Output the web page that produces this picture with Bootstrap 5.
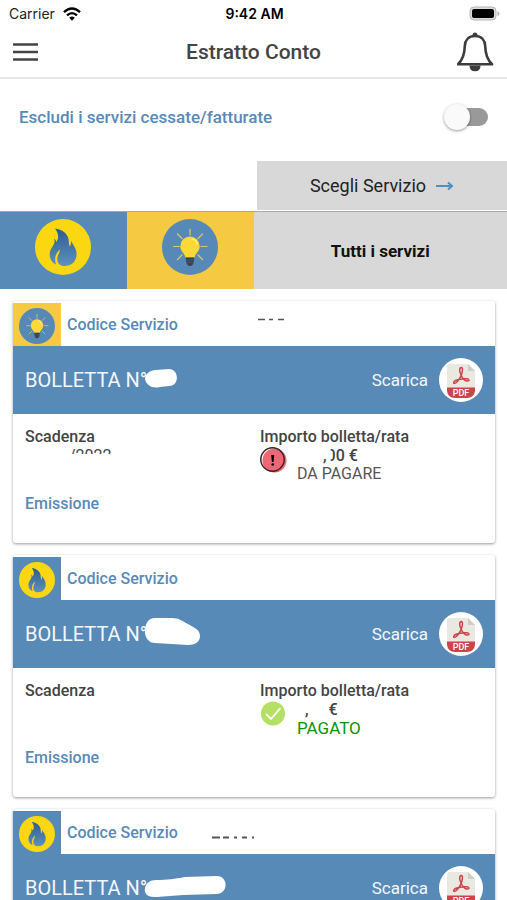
<!DOCTYPE html>
<html lang="it">
<head>
<meta charset="utf-8">
<meta name="viewport" content="width=device-width, initial-scale=1">
<title>Estratto Conto</title>
<link href="https://cdn.jsdelivr.net/npm/bootstrap@5.3.0/dist/css/bootstrap.min.css" rel="stylesheet">
<style>
  :root { --brand: #588ab8; --sun: #f5ca42; --ink: #444; }
  body { font-family: Roboto, "Liberation Sans", sans-serif; font-size: 16px; line-height: 20px; color: var(--ink); background: #fff; }
  svg { display: block; flex: none; }
  .fw-mid { font-weight: 500; }
  .brand { color: var(--brand); }
  .status-bar { height: 27px; padding: 0 7px 0 9px; font-family: Inter, Roboto, sans-serif; font-size: 14px; color: #222; }
  .status-bar > * { flex: 1 1 0; }
  .app-bar { height: 52px; padding: 0 12px; border-bottom: 2px solid #e6e6e6; }
  .app-bar h1 { font-size: 21px; line-height: 24px; }
  .filter-row { height: 76px; padding: 0 19px; font-size: 17px; }
  .switch { appearance: none; width: 44px; height: 26px; margin: 0; position: relative; }
  .switch::after { content: ""; position: absolute; right: 0; top: 4px; width: 34px; height: 18px; border-radius: 9px; background: #999; }
  .switch::before { content: ""; position: absolute; z-index: 1; left: 0; top: 0; width: 26px; height: 26px; border-radius: 50%; background: #fafafa; box-shadow: 0 1px 3px #0006; transition: left .15s; }
  .switch:checked::before { left: 18px; }
  .choose { height: 49px; width: calc(50% + -4px); min-width: 250px; background: #d8d8d8; color: #222; font-size: 18px; margin-top: 6px; padding: 0; }
  .tabs { height: 78px; margin-top: 1px; border-top: 1px solid #a8a8a8; }
  .tabs button { padding: 0; flex: 1 1 25%; }
  .tabs .icon-tab { padding-bottom: 7px; }
  .tabs .all-tab { flex-basis: 50%; background: #d8d8d8; color: #111; font-size: 17px; }
  .gas { background: var(--brand); }
  .power { background: var(--sun); }
  .bills { padding: 12px 12px 12px 13px; display: grid; gap: 12px; }
  .bill { height: 242px; border-radius: 3px; background: #fff; box-shadow: 0 1px 3px #0006; overflow: hidden; }
  .bill-head { height: 45px; gap: 6px; padding-top: 2px; }
  .kind { width: 48px; height: 43px; padding-top: 5px; margin-bottom: 1px; }
  .bill-bar { height: 68px; padding: 0 12px; background: var(--brand); color: #f3f7fb; }
  .bill-bar h2 { font-size: 20px; line-height: 24px; font-weight: 400; }
  .bill-bar a { gap: 11px; color: #f3f7fb; font-size: 17px; }
  .blob { margin-left: -3px; }
  .bill-body { padding: 13px 12px 0; line-height: 20px; }
  .bill-body > div { flex: 1 1 0; }
  .bill-body .amount-col { padding-left: 12px; }
  .date-cut { height: 18px; padding-left: 44px; line-height: 18px; clip-path: inset(0 0 11px 0); margin-bottom: 29px; }
  .amount { gap: 10px; line-height: 18px; }
  .amount .sum { padding-left: 26px; }
  .amount .sum-short { padding-left: 8px; }
  .euro { padding-left: 20px; }
  .half { display: inline-block; clip-path: inset(0 0 0 45%); }
  .state { color: #555; }
  .paid { color: #0a930a; font-size: 17px; }
</style>
<script src="https://cdn.jsdelivr.net/npm/bootstrap@5.3.0/dist/js/bootstrap.bundle.min.js"></script>
</head>
<body>
<svg width="0" height="0" class="position-absolute" aria-hidden="true">
  <defs>
    <linearGradient id="fl" x1="0" y1="0" x2="0" y2="1"><stop offset="0" stop-color="#2b5c8e"/><stop offset=".6" stop-color="#4a7cab"/><stop offset="1" stop-color="#5e91be"/></linearGradient>
    <symbol id="flame" viewBox="0 0 56 56">
      <circle cx="28" cy="28" r="28" fill="#fbd711"/>
      <path fill="url(#fl)" d="M20 9.500c7 .8 12.500 5 13.500 10.500.4 3 .3 5 1.300 7.500 1-1.500 1.400-3.500 1.200-6 1.500 4 5.600 7.500 5.600 13.500 0 7-4.600 12-12.100 12-5 0-7.500-3.500-7.200-7.500.3-3.500 2.200-5 2.700-9-4.500 3.500-6 9-4 15-4-1.500-6.500-5.500-6.300-11 .2-4 3.500-7 4.600-10.500.5-1.500.3-3-.3-4.500 1.500 1 2 2 2.200 3.500 3-4 2.300-9-1.200-13.500z"/>
    </symbol>
    <symbol id="bulb" viewBox="0 0 56 56">
      <circle cx="28" cy="28" r="28" fill="#5689b7"/>
      <path stroke="#d9ca62" stroke-width="1.200" stroke-linecap="round" d="M28 10v6M11.500 27.500h6M39 27.500h6M15.500 15l4.500 4.500M40.500 15L36 19.500M15.500 40.500L20 36M40.500 40.500L36 36"/>
      <path fill="#fcd936" d="M28 17.500a9.700 9.700 0 0 1 9.700 9.700c0 5-4 6.500-5.200 11.300h-9c-1.200-4.800-5.200-6.300-5.200-11.300a9.700 9.700 0 0 1 9.700-9.700z"/>
      <path fill="none" stroke="#fff2a0" stroke-width="1.200" stroke-linecap="round" d="M30 20c3 .6 5 2.600 5.200 5.500"/>
      <path fill="#39424d" d="M23.700 38.500h8.600l-.6 5c-.3 1.500-1.700 3.500-3.700 3.500s-3.400-2-3.700-3.500z"/>
      <path stroke="#59636e" stroke-width=".6" d="M24 41h8M24.500 43.500h7"/>
    </symbol>
    <symbol id="pdf" viewBox="0 0 44 44">
      <circle cx="22" cy="22" r="22" fill="#fff"/>
      <path fill="#e9e8e1" d="M11 6h18l7 7v17H8V9q0-3 3-3z"/>
      <path fill="#cfcec6" d="M29 6l7 7h-7z"/>
      <path fill="none" stroke="#ca4448" stroke-width="1.500" stroke-linejoin="round" d="M22 17c-2-4-1.500-7.500.2-7.500 1.700 0 1.600 3.500.1 7.500-1.300 3.500-4.800 8.500-6.800 8.500-1.500 0-1-2.200 1.500-3.200 3.500-1.300 8-1.800 11-1.500 2.500.3 2.500 2.300.5 2.300-2.300 0-5-2.600-6.500-6.100z"/>
      <path fill="#ca4448" d="M8 29.500h28v3.500q-1 7-8 7H16q-7 0-8-7z"/>
      <text x="22" y="38" text-anchor="middle" font-family="Roboto, sans-serif" font-size="9" font-weight="500" fill="#fff">PDF</text>
    </symbol>
  </defs>
</svg>

<div class="d-flex flex-column vh-100 overflow-hidden">
  <div class="status-bar d-flex align-items-center flex-shrink-0">
    <div class="d-flex align-items-center gap-2">Carrier
      <svg width="18" height="14" viewBox="0 0 18 14" fill="none" stroke="#000" stroke-width="2.300"><path d="M1 5.200q8-7.400 16 0M4 8.400q5-4.600 10 0"/><path d="M6.200 10.800q2.800-2.400 5.600 0L9 13.800z" fill="#000" stroke="none"/></svg>
    </div>
    <div class="text-center fw-semibold text-black">9:42 AM</div>
    <div class="d-flex justify-content-end">
      <svg width="31" height="15" viewBox="0 0 31 15"><rect x="1" y="1" width="26" height="13" rx="4" fill="#ddd" stroke="#b5b5b5"/><rect x="3" y="3" width="22" height="9" rx="2"/><path d="M28.500 5q2 1 2 2.500t-2 2.500z" fill="#b5b5b5"/></svg>
    </div>
  </div>

  <header class="app-bar d-flex align-items-center justify-content-between flex-shrink-0">
    <button class="btn p-0 border-0" type="button" aria-label="Menu">
      <svg width="38" height="20" viewBox="0 0 38 20" stroke="#444" stroke-width="2.600"><path d="M1 2.500h25M1 10h25M1 17.500h25"/></svg>
    </button>
    <h1 class="fw-mid m-0">Estratto Conto</h1>
    <button class="btn p-0 border-0" type="button" aria-label="Notifiche">
      <svg width="38" height="40" viewBox="0 0 38 40"><circle cx="18" cy="3" r="2.500" fill="#3d3d3d"/><path d="M12.500 33.500h11q0 5.800-5.500 5.800t-5.500-5.800z" fill="#3d3d3d"/><path d="M18 4c6.500 0 10 4.300 10.200 10 .2 9 2.300 14 6.800 18.300H1C5.500 28 7.600 23 7.800 14 8 8.300 11.500 4 18 4z" fill="#fff" stroke="#3d3d3d" stroke-width="2.600" stroke-linejoin="round"/></svg>
    </button>
  </header>

  <div class="filter-row d-flex align-items-center justify-content-between flex-shrink-0">
    <label for="hideClosed" class="brand fw-mid">Escludi i servizi cessate/fatturate</label>
    <input class="switch" type="checkbox" role="switch" id="hideClosed">
  </div>

  <button type="button" class="choose btn border-0 rounded-0 ms-auto d-flex align-items-center justify-content-center flex-shrink-0 gap-2">
    Scegli Servizio
    <svg width="20" height="12" viewBox="0 0 20 12" fill="none" stroke="#4d8fc0" stroke-width="2"><path d="M2 6h16M14 2.500l4 3.500-4 3.500"/></svg>
  </button>
  <nav class="tabs d-flex flex-shrink-0" aria-label="Servizi">
    <button type="button" class="icon-tab gas border-0 d-flex align-items-center justify-content-center" aria-label="Gas"><svg width="56" height="56"><use href="#flame"/></svg></button>
    <button type="button" class="icon-tab power border-0 d-flex align-items-center justify-content-center" aria-label="Luce"><svg width="56" height="56"><use href="#bulb"/></svg></button>
    <button type="button" class="all-tab border-0 fw-bold">Tutti i servizi</button>
  </nav>

  <main class="bills flex-grow-1 overflow-hidden">
    <article class="bill">
      <div class="bill-head d-flex align-items-center">
        <div class="kind power d-flex justify-content-center"><svg width="36" height="36"><use href="#bulb"/></svg></div>
        <span class="brand fw-mid">Codice Servizio</span>
        <svg class="ms-5" width="110" height="14" viewBox="0 0 110 14" stroke="#555" stroke-width="1.300"><path d="M26 1.500h7M37 1.500h4M46 1.500h6"/></svg>
      </div>
      <div class="bill-bar d-flex align-items-center justify-content-between">
        <div class="d-flex align-items-center"><h2 class="m-0">BOLLETTA N°</h2>
          <svg class="blob" width="34" height="22" viewBox="0 0 34 22" fill="#fff"><path d="M12 1l13-1c10 0 11 17 0 17l-9 1C8 20 2 16 1 10 1 5 6 1 12 1z"/></svg></div>
        <a href="#pdf1" class="d-flex align-items-center text-decoration-none">Scarica <svg width="44" height="44"><use href="#pdf"/></svg></a>
      </div>
      <div class="bill-body d-flex">
        <div>
          <div class="fw-mid">Scadenza</div>
          <div class="date-cut">/2022</div>
          <div class="brand fw-mid">Emissione</div>
        </div>
        <div class="amount-col">
          <div class="fw-mid">Importo bolletta/rata</div>
          <div class="amount d-flex">
            <svg width="27" height="26" viewBox="0 0 27 26"><circle cx="14.500" cy="13.500" r="12" fill="#ef6675"/><circle cx="12.500" cy="12.500" r="11.700" fill="none" stroke="#37252a" stroke-width="1.500"/><path d="M11.200 8h3l-.7 7h-1.600z"/><circle cx="12.700" cy="17.500" r="1.300"/></svg>
            <div><div class="sum fw-mid">,<span class="half">0</span>0 €</div><div class="state">DA PAGARE</div></div>
          </div>
        </div>
      </div>
    </article>

    <article class="bill">
      <div class="bill-head d-flex align-items-center">
        <div class="kind gas d-flex justify-content-center"><svg width="36" height="36"><use href="#flame"/></svg></div>
        <span class="brand fw-mid">Codice Servizio</span>
      </div>
      <div class="bill-bar d-flex align-items-center justify-content-between">
        <div class="d-flex align-items-center"><h2 class="m-0">BOLLETTA N°</h2>
          <svg class="blob" width="60" height="34" viewBox="0 0 60 34" fill="#fff"><path d="M11 1h17c7 0 10 3 16 6 7 4 12 6 12 12s-5 9-12 9l-33-2C5 26 1 21 1 15 1 7 4 1 11 1z"/></svg></div>
        <a href="#pdf2" class="d-flex align-items-center text-decoration-none">Scarica <svg width="44" height="44"><use href="#pdf"/></svg></a>
      </div>
      <div class="bill-body d-flex">
        <div>
          <div class="fw-mid">Scadenza</div>
          <div class="date-cut"></div>
          <div class="brand fw-mid">Emissione</div>
        </div>
        <div class="amount-col">
          <div class="fw-mid">Importo bolletta/rata</div>
          <div class="amount d-flex">
            <svg width="27" height="26" viewBox="0 0 27 26"><circle cx="13" cy="12.500" r="12" fill="#b4e065"/><path d="M6 13l5 5 9.500-11" fill="none" stroke="#fff" stroke-width="1.800"/></svg>
            <div><div class="sum-short fw-mid">,<span class="euro">€</span></div><div class="state paid">PAGATO</div></div>
          </div>
        </div>
      </div>
    </article>

    <article class="bill">
      <div class="bill-head d-flex align-items-center">
        <div class="kind gas d-flex justify-content-center"><svg width="36" height="36"><use href="#flame"/></svg></div>
        <span class="brand fw-mid">Codice Servizio</span>
        <svg class="ms-4" width="60" height="14" viewBox="0 0 60 14" stroke="#555" stroke-width="1.800"><path d="M4 11.500h8M15 11.500h6M26 11.500h3M34 11.500h5M44 11.500h2"/></svg>
      </div>
      <div class="bill-bar d-flex align-items-center justify-content-between">
        <div class="d-flex align-items-center"><h2 class="m-0">BOLLETTA N°</h2>
          <svg class="blob" width="86" height="24" viewBox="0 0 86 24" fill="#fff"><path d="M12 4c12 0 18-1 29-3l32-1c11 0 12 17 0 18l-34 1-26 2C2 22 0 16 1 12c1-5 5-8 11-8z"/></svg></div>
        <a href="#pdf3" class="d-flex align-items-center text-decoration-none">Scarica <svg width="44" height="44"><use href="#pdf"/></svg></a>
      </div>
    </article>
  </main>
</div>
</body>
</html>
